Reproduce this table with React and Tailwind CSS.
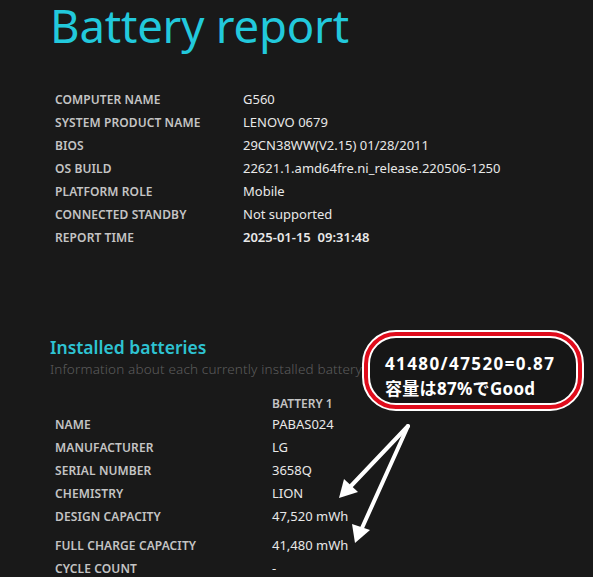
import React from "react";

const sys = [
  ["COMPUTER NAME", "G560"],
  ["SYSTEM PRODUCT NAME", "LENOVO 0679"],
  ["BIOS", "29CN38WW(V2.15) 01/28/2011"],
  ["OS BUILD", "22621.1.amd64fre.ni_release.220506-1250"],
  ["PLATFORM ROLE", "Mobile"],
  ["CONNECTED STANDBY", "Not supported"],
  ["REPORT TIME", "2025-01-15\u00a0\u00a009:31:48", true],
];

const bat = [
  ["NAME", "PABAS024", ""],
  ["MANUFACTURER", "LG", ""],
  ["SERIAL NUMBER", "3658Q", ""],
  ["CHEMISTRY", "LION", ""],
  ["DESIGN CAPACITY", "47,520 mWh", "mb-[6px]"],
  ["FULL CHARGE CAPACITY", "41,480 mWh", ""],
  ["CYCLE COUNT", "-", ""],
];

export default function App() {
  return (
    <div
      className="relative w-[593px] h-[577px] overflow-hidden bg-[#191919]"
      style={{ fontFamily: '"Noto Sans", "Noto Sans CJK JP", sans-serif' }}
    >
      <div className="h-[62px] pl-[50px]">
        <h1 className="text-[45.5px] leading-[50px] font-normal text-[#22c9dc] tracking-[-0.2px]">
          Battery report
        </h1>
      </div>

      <div className="pl-[55px] pt-[26px] flex flex-col">
        {sys.map(([k, v, b]) => (
          <div key={k} className="flex h-[23px] items-center">
            <div className="w-[188px] text-[12px] font-semibold text-[#c4c4c4] tracking-[0.1px]">{k}</div>
            <div className={`text-[13px] text-[#e8e8e8] ${b ? "font-semibold" : ""}`}>{v}</div>
          </div>
        ))}
      </div>

      <div className="pl-[50px] pt-[87px]">
        <div className="text-[17.5px] leading-[22px] font-semibold text-[#2ec3d2]">Installed batteries</div>
        <div className="text-[13.5px] leading-[22px] font-light text-[#5c5c5c] tracking-[0.15px]">
          Information about each currently installed battery
        </div>
      </div>

      <div className="pl-[272px] pt-[11px] h-[36px] flex items-center text-[12px] font-semibold text-[#c4c4c4]">
        BATTERY 1
      </div>

      <div className="pl-[55px] -mt-[3px] flex flex-col">
        {bat.map(([k, v, m]) => (
          <div key={k} className={`flex h-[23px] items-center ${m}`}>
            <div className="w-[217px] text-[12px] font-semibold text-[#c4c4c4] tracking-[0.1px]">{k}</div>
            <div className="text-[13px] text-[#e8e8e8]">{v}</div>
          </div>
        ))}
      </div>

      {/* callout */}
      <div className="absolute left-[362px] top-[330px] w-[222px] h-[81px] rounded-[34px] border-2 border-white bg-[#e00c1c] p-[4px]">
        <div className="w-full h-full rounded-[28px] border-2 border-white bg-[#161616] flex flex-col justify-center pl-[15px] pt-[10px] text-white font-bold text-[17px] leading-[25px]">
          <div className="tracking-[1.4px]">41480/47520=0.87</div>
          <div className="tracking-[0.3px]">容量は87%でGood</div>
        </div>
      </div>

      {/* arrows */}
      <svg className="absolute left-0 top-0" width="593" height="577" viewBox="0 0 593 577">
        <line x1="408" y1="426" x2="350" y2="487" stroke="white" strokeWidth="4" strokeLinecap="round" />
        <polygon points="339,498 344,479 358,492" fill="white" />
        <line x1="408" y1="426" x2="362" y2="528" stroke="white" strokeWidth="4" strokeLinecap="round" />
        <polygon points="355,543 352,524 370,530" fill="white" />
      </svg>
    </div>
  );
}
